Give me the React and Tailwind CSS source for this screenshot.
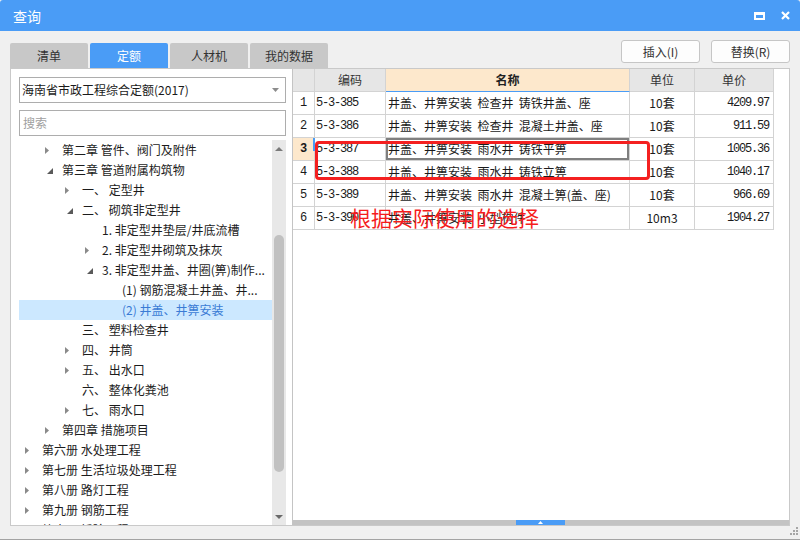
import React from 'react';

const tabs = ['清单', '定额', '人材机', '我的数据'];

const tree = [
  { l: 1, t: '第二章 管件、阀门及附件', a: 'c' },
  { l: 1, t: '第三章 管道附属构筑物', a: 'e' },
  { l: 2, t: '一、 定型井', a: 'c' },
  { l: 2, t: '二、 砌筑非定型井', a: 'e' },
  { l: 3, t: '1. 非定型井垫层/井底流槽' },
  { l: 3, t: '2. 非定型井砌筑及抹灰', a: 'c' },
  { l: 3, t: '3. 非定型井盖、井圈(箅)制作...', a: 'e' },
  { l: 4, t: '(1) 钢筋混凝土井盖、井...' },
  { l: 4, t: '(2) 井盖、井箅安装', sel: true },
  { l: 2, t: '三、 塑料检查井' },
  { l: 2, t: '四、 井筒', a: 'c' },
  { l: 2, t: '五、 出水口', a: 'c' },
  { l: 2, t: '六、 整体化粪池' },
  { l: 2, t: '七、 雨水口', a: 'c' },
  { l: 1, t: '第四章 措施项目', a: 'c' },
  { l: 0, t: '第六册 水处理工程', a: 'c' },
  { l: 0, t: '第七册 生活垃圾处理工程', a: 'c' },
  { l: 0, t: '第八册 路灯工程', a: 'c' },
  { l: 0, t: '第九册 钢筋工程', a: 'c' },
  { l: 0, t: '第十册 拆除工程', a: 'c' },
];

const indent = ['pl-0', 'pl-[20px]', 'pl-[40px]', 'pl-[60px]', 'pl-[80px]'];

const rows = [
  ['1', '5-3-385', '井盖、井箅安装  检查井  铸铁井盖、座', '10套', '4209.97'],
  ['2', '5-3-386', '井盖、井箅安装  检查井  混凝土井盖、座', '10套', '911.59'],
  ['3', '5-3-387', '井盖、井箅安装  雨水井  铸铁平箅', '10套', '1005.36'],
  ['4', '5-3-388', '井盖、井箅安装  雨水井  铸铁立箅', '10套', '1040.17'],
  ['5', '5-3-389', '井盖、井箅安装  雨水井  混凝土箅(盖、座)', '10套', '966.69'],
  ['6', '5-3-390', '井盖、井箅安装  小型构件', '10m3', '1904.27'],
];

const mono = "font-['Liberation_Mono','Noto_Sans_CJK_SC',monospace]";

const Arrow = ({ kind }) => {
  if (kind === 'c') {
    return (
      <svg width="4" height="7" viewBox="0 0 4 7">
        <polygon points="0,0 4,3.5 0,7" fill="#8a8a8a" />
      </svg>
    );
  }
  if (kind === 'e') {
    return (
      <svg width="6" height="6" viewBox="0 0 6 6" className="ml-[5px] mt-[2px]">
        <polygon points="6,0 6,6 0,6" fill="#5a5a5a" />
      </svg>
    );
  }
  return null;
};

const TreeRow = ({ item }) => (
  <div
    className={`flex h-[20px] shrink-0 items-center whitespace-pre ${indent[item.l]} ${
      item.sel ? 'bg-[#cce8ff] text-[#3a7bd5]' : 'text-[#1c1c1c]'
    }`}
  >
    <div className="flex h-[20px] w-[16px] shrink-0 items-center justify-center">
      <Arrow kind={item.a} />
    </div>
    <span className="ml-[7px] text-[12px] leading-none">{item.t}</span>
  </div>
);

const App = () => {
  return (
    <div className="relative flex h-[540px] w-[800px] flex-col border-b border-[#a3a3a3] bg-[#f0f0f0] font-['Noto_Sans_CJK_SC',sans-serif]">
      {/* title bar */}
      <div className="flex h-[31px] shrink-0 items-center justify-between rounded-t-[3px] bg-[#4a9cf6] pl-[13px] pr-[10px]">
        <span className="text-[14px] leading-none text-white">查询</span>
        <div className="flex items-center gap-[16px]">
          <div className="h-[8px] w-[11px] border-2 border-t-[3px] border-white" />
          <svg width="9" height="9" viewBox="0 0 9 9">
            <path d="M1 1 L8 8 M8 1 L1 8" stroke="#fff" strokeWidth="2.2" />
          </svg>
        </div>
      </div>

      {/* tabs + buttons */}
      <div className="flex h-[37px] shrink-0 justify-between px-[10px] pt-[9px]">
        <div className="flex gap-[2px] self-end">
          {tabs.map((t, i) => (
            <div
              key={t}
              className={`flex h-[25px] w-[78px] items-center justify-center rounded-t-[2px] text-[12px] ${
                i === 1 ? 'bg-[#4a9cf6] text-white' : 'bg-[#c8c8c8] text-[#333]'
              }`}
            >
              {t}
            </div>
          ))}
        </div>
        <div className="flex gap-[11px] self-start">
          {['插入(I)', '替换(R)'].map((b) => (
            <div
              key={b}
              className="flex h-[23px] w-[79px] items-center justify-center rounded-[3px] border border-[#c6c6c6] bg-[#fdfdfd] text-[12px] text-[#333]"
            >
              {b}
            </div>
          ))}
        </div>
      </div>

      {/* content */}
      <div className="mx-[10px] flex h-[458px] shrink-0 border border-[#c9c9c9] bg-white">
        {/* left panel */}
        <div className="flex w-[282px] shrink-0 flex-col border-r border-[#c4c4c4] pl-[8px] pr-[6px] pt-[8px]">
          <div className="flex h-[26px] shrink-0 items-center justify-between border border-[#adadad] pl-[2px] pr-[6px]">
            <span className="text-[12px] text-[#1a1a1a]">海南省市政工程综合定额(2017)</span>
            <svg width="7" height="4" viewBox="0 0 7 4">
              <polygon points="0,0 7,0 3.5,4" fill="#8c8c8c" />
            </svg>
          </div>
          <div className="mt-[7px] flex h-[26px] shrink-0 items-center border border-[#adadad] pl-[3px] text-[12px] text-[#a0a0a0]">
            搜索
          </div>
          <div className="mt-[4px] flex min-h-0 flex-1">
            <div className="flex min-w-0 flex-1 flex-col overflow-hidden">
              {tree.map((item, i) => (
                <TreeRow key={i} item={item} />
              ))}
            </div>
            <div className="flex w-[14px] shrink-0 flex-col bg-[#e8e8e8]">
              <div className="flex h-[11px] shrink-0 items-end justify-center">
                <svg width="8" height="4" viewBox="0 0 8 4">
                  <polygon points="0,4 8,4 4,0" fill="#7a7a7a" />
                </svg>
              </div>
              <div className="mx-auto mt-[84px] h-[237px] w-[10px] rounded-full bg-[#c1c1c1]" />
              <div className="flex-1" />
              <div className="flex h-[10px] shrink-0 items-start justify-center">
                <svg width="8" height="4" viewBox="0 0 8 4">
                  <polygon points="0,0 8,0 4,4" fill="#6a6a6a" />
                </svg>
              </div>
            </div>
          </div>
        </div>

        {/* right panel */}
        <div className="relative flex min-w-0 flex-1 flex-col">
          <div className="grid grid-cols-[22px_71px_244px_65px_79px] text-[12px] text-[#1a1a1a]">
            <div className="h-[23px] border-b border-r border-[#d3d3d3] bg-[#e6e6e6]" />
            <div className="flex h-[23px] items-center justify-center border-b border-r border-[#d3d3d3] bg-[#e6e6e6] text-[#333]">编码</div>
            <div className="flex h-[23px] items-center justify-center border-b border-r border-[#d3d3d3] border-b-[#4a9cf6] bg-[#fde8cc] font-bold text-[#222]">名称</div>
            <div className="flex h-[23px] items-center justify-center border-b border-r border-[#d3d3d3] bg-[#e6e6e6] text-[#333]">单位</div>
            <div className="flex h-[23px] items-center justify-center border-b border-r border-[#d3d3d3] bg-[#e6e6e6] text-[#333]">单价</div>

            {rows.map((r) => {
              const cur = r[0] === '3';
              return (
                <React.Fragment key={r[0]}>
                  <div
                    className={`relative flex h-[23px] items-center justify-center border-b border-r border-[#d3d3d3] ${mono} ${
                      cur ? 'bg-[#fde8cc] font-bold' : ''
                    }`}
                  >
                    {r[0]}
                    {cur && <div className="absolute right-[-1px] top-0 h-[13px] w-[2px] bg-[#4a9cf6]" />}
                  </div>
                  <div className={`flex h-[23px] items-center border-b border-r border-[#d3d3d3] pl-[1px] text-[12px] tracking-[-1.2px] ${mono}`}>
                    {r[1]}
                  </div>
                  <div
                    className={`flex h-[23px] items-center whitespace-pre border-b border-r border-[#d3d3d3] pl-[2px] ${
                      cur ? 'shadow-[inset_0_0_0_2px_#7f7f7f]' : ''
                    }`}
                  >
                    {r[2]}
                  </div>
                  <div className="flex h-[23px] items-center justify-center border-b border-r border-[#d3d3d3]">{r[3]}</div>
                  <div className={`flex h-[23px] items-center justify-end border-b border-r border-[#d3d3d3] pr-[4px] text-[12px] tracking-[-1.2px] ${mono}`}>
                    {r[4]}
                  </div>
                </React.Fragment>
              );
            })}
          </div>

          <div className="flex-1" />
          <div className="flex h-[5px] shrink-0 bg-[#c3c3c3]">
            <div className="ml-[223px] flex h-[5px] w-[49px] items-center justify-center bg-[#4a9cf6]">
              <svg width="5" height="3" viewBox="0 0 5 3">
                <polygon points="0,3 5,3 2.5,0" fill="#fff" />
              </svg>
            </div>
          </div>

          {/* annotation overlays */}
          <div className="pointer-events-none absolute left-[22px] top-[72px] h-[39px] w-[335px] rounded-[4px] border-[3px] border-[#f42020]" />
          <div className="pointer-events-none absolute left-[57px] top-[138px] whitespace-nowrap text-[21px] leading-[21px] text-[#f51d1d]">
            根据实际使用的选择
          </div>
        </div>
      </div>

      {/* bottom strip with size grip */}
      <div className="flex flex-1 items-start justify-end pr-[2px] pt-[1px]">
        <svg width="9" height="9" viewBox="0 0 9 9">
          <rect x="7" y="0" width="2" height="2" fill="#a6a6a6" />
          <rect x="4" y="3" width="2" height="2" fill="#a6a6a6" />
          <rect x="7" y="3" width="2" height="2" fill="#a6a6a6" />
          <rect x="1" y="6" width="2" height="2" fill="#a6a6a6" />
          <rect x="4" y="6" width="2" height="2" fill="#a6a6a6" />
          <rect x="7" y="6" width="2" height="2" fill="#a6a6a6" />
        </svg>
      </div>
    </div>
  );
};

export default App;
